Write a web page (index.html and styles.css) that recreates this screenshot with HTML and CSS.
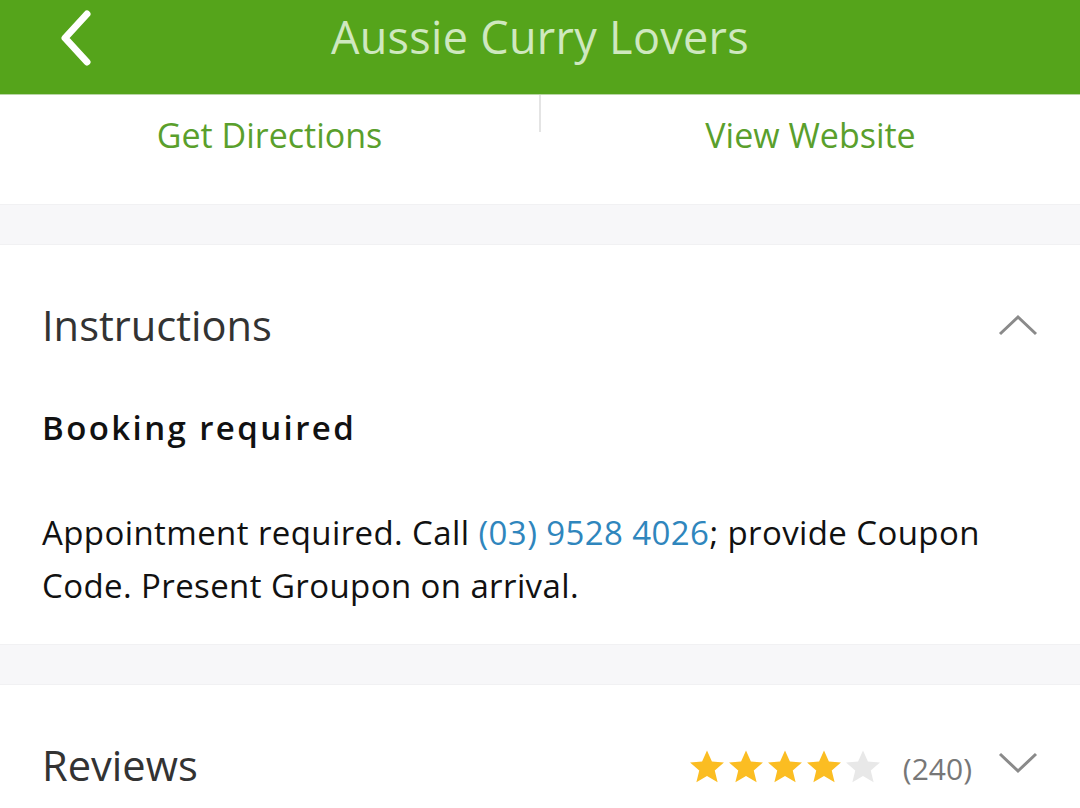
FILE: index.html
```html
<!DOCTYPE html>
<html>
<head>
<meta charset="utf-8">
<link rel="stylesheet" href="styles.css">
</head>
<body>
<header class="topbar">
  <svg class="back" width="40" height="56" viewBox="0 0 40 56"><path d="M30 4 L8 28 L30 52" fill="none" stroke="#fff" stroke-width="7" stroke-linecap="round" stroke-linejoin="round"/></svg>
  <h1 class="title">Aussie Curry Lovers</h1>
</header>
<div class="actions">
  <a class="action">Get Directions</a>
  <span class="vsep"></span>
  <a class="action">View Website</a>
</div>
<div class="band"></div>
<section class="card">
  <div class="card-head">
    <h2 class="card-title">Instructions</h2>
    <svg class="chev" width="40" height="22" viewBox="0 0 40 22"><path d="M2 20 L20 3 L38 20" fill="none" stroke="#8a8a8a" stroke-width="3"/></svg>
  </div>
  <h3 class="subhead">Booking required</h3>
  <p class="body">Appointment required. Call <span class="phone">(03) 9528 4026</span>; provide Coupon Code. Present Groupon on arrival.</p>
</section>
<div class="band band2"></div>
<section class="card reviews">
  <div class="card-head">
    <h2 class="card-title">Reviews</h2>
    <div class="rating">
      <div class="stars">
        <svg class="star" viewBox="0 0 24 24"><path d="M12 1.5l3.1 7.1 7.6.6-5.8 5 1.8 7.5L12 17.7l-6.7 4 1.8-7.5-5.8-5 7.6-.6z" fill="#fbbd22"/></svg>
        <svg class="star" viewBox="0 0 24 24"><path d="M12 1.5l3.1 7.1 7.6.6-5.8 5 1.8 7.5L12 17.7l-6.7 4 1.8-7.5-5.8-5 7.6-.6z" fill="#fbbd22"/></svg>
        <svg class="star" viewBox="0 0 24 24"><path d="M12 1.5l3.1 7.1 7.6.6-5.8 5 1.8 7.5L12 17.7l-6.7 4 1.8-7.5-5.8-5 7.6-.6z" fill="#fbbd22"/></svg>
        <svg class="star" viewBox="0 0 24 24"><path d="M12 1.5l3.1 7.1 7.6.6-5.8 5 1.8 7.5L12 17.7l-6.7 4 1.8-7.5-5.8-5 7.6-.6z" fill="#fbbd22"/></svg>
        <svg class="star" viewBox="0 0 24 24"><path d="M12 1.5l3.1 7.1 7.6.6-5.8 5 1.8 7.5L12 17.7l-6.7 4 1.8-7.5-5.8-5 7.6-.6z" fill="#e8e8e8"/></svg>
      </div>
      <span class="count">(240)</span>
      <svg class="chev down" width="40" height="22" viewBox="0 0 40 22"><path d="M2 2 L20 19 L38 2" fill="none" stroke="#8a8a8a" stroke-width="3"/></svg>
    </div>
  </div>
</section>
</body>
</html>
```
FILE: styles.css
```css
* { box-sizing: border-box; margin: 0; padding: 0; }
html, body { width: 1080px; height: 808px; overflow: hidden; background: #fff; }
body { font-family: "Open Sans", "Noto Sans", sans-serif; }

.topbar {
  height: 95px;
  background: #55a41b;
  border-bottom: 1px solid #b9d6a6;
  display: flex;
  align-items: center;
  justify-content: center;
  position: relative;
}
.back { position: absolute; left: 57px; top: 10px; }
.title {
  font-weight: 400;
  font-size: 45px;
  color: #cfe8bf;
  margin-top: -22px;
  letter-spacing: 0.3px;
}

.actions {
  height: 109px;
  display: flex;
  align-items: flex-start;
}
.action {
  flex: 1;
  text-align: center;
  color: #5a9f2c;
  font-size: 34px;
  padding-top: 17px;
}
.vsep { width: 2px; height: 37px; background: #e4e4e4; }

.band {
  height: 41px;
  background: #f7f7f9;
  border-top: 1px solid #f1f1f3;
  border-bottom: 1px solid #f1f1f3;
}
.card { padding: 0 42px; }
.card-head {
  display: flex;
  align-items: center;
  justify-content: space-between;
  height: 160px;
}
.card-title { font-weight: 400; font-size: 41.6px; color: #333; }
.subhead {
  font-weight: 600;
  font-size: 33px;
  color: #111;
  letter-spacing: 2.4px;
}
.body {
  font-size: 33px;
  line-height: 53px;
  color: #111;
  margin-top: 56px;
  margin-bottom: 32px;
  letter-spacing: 0.4px;
}
.phone { color: #2f86bd; }

.rating { display: flex; align-items: center; }
.stars { display: flex; gap: 1px; margin-top: 4px; }
.star { width: 38px; height: 38px; }
.count { font-size: 30px; color: #777; margin-left: 21px; margin-right: 26px; margin-top: 6px; }
.down { margin-top: -4px; }
```
